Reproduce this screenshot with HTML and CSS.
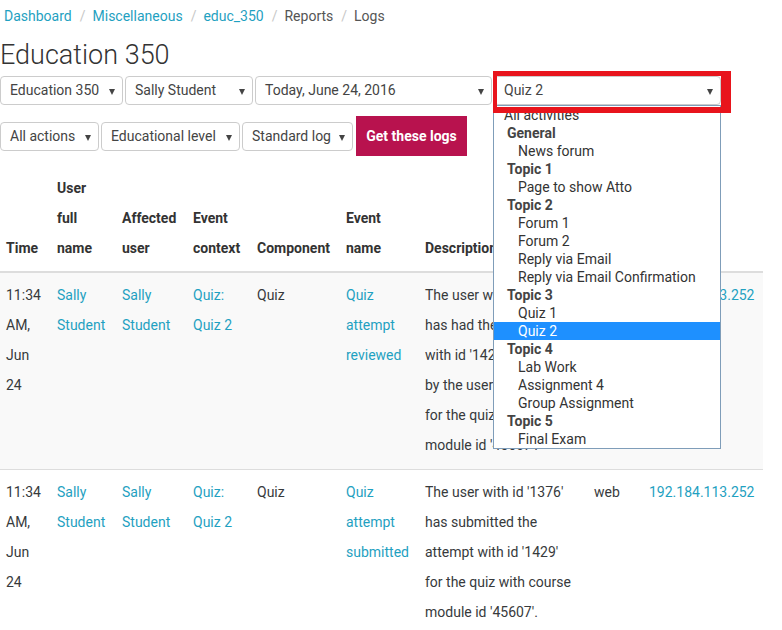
FILE: index.html
```html
<!DOCTYPE html>
<html lang="en">
<head>
<meta charset="utf-8">
<title>Logs</title>
<link rel="stylesheet" href="styles.css">
</head>
<body>
<div class="page">
  <nav class="breadcrumb">
    <a href="#">Dashboard</a><span class="sep">/</span><a href="#">Miscellaneous</a><span class="sep">/</span><a href="#">educ_350</a><span class="sep">/</span><span class="crumb">Reports</span><span class="sep">/</span><span class="crumb">Logs</span>
  </nav>
  <h1 class="title">Education 350</h1>

  <div class="filters">
    <div class="select w-course">Education 350<span class="arrow"></span></div>
    <div class="select w-user">Sally Student<span class="arrow"></span></div>
    <div class="select w-date">Today, June 24, 2016<span class="arrow"></span></div>
    <div class="select w-activity">Quiz 2<span class="arrow"></span></div>
  </div>
  <div class="filters second">
    <div class="select w-actions">All actions<span class="arrow"></span></div>
    <div class="select w-level">Educational level<span class="arrow"></span></div>
    <div class="select w-log">Standard log<span class="arrow"></span></div>
    <button class="btn-primary">Get these logs</button>
  </div>

  <table class="logs">
    <colgroup>
      <col class="c-time"><col class="c-user"><col class="c-aff"><col class="c-ctx"><col class="c-comp"><col class="c-event"><col class="c-desc"><col class="c-origin"><col class="c-ip">
    </colgroup>
    <thead>
      <tr>
        <th>Time</th>
        <th class="user">User full name</th>
        <th>Affected user</th>
        <th>Event context</th>
        <th>Component</th>
        <th>Event name</th>
        <th class="desc">Description</th>
        <th>Origin</th>
        <th>IP address</th>
      </tr>
    </thead>
    <tbody>
      <tr class="odd">
        <td>11:34 AM, Jun 24</td>
        <td class="user"><a href="#">Sally Student</a></td>
        <td><a href="#">Sally Student</a></td>
        <td><a href="#">Quiz: Quiz 2</a></td>
        <td>Quiz</td>
        <td><a href="#">Quiz attempt reviewed</a></td>
        <td class="desc">The user with id '1376' has had their attempt with id '1429' reviewed by the user with id '2' for the quiz with course module id '45607'.</td>
        <td>web</td>
        <td><a href="#">192.184.113.252</a></td>
      </tr>
      <tr>
        <td>11:34 AM, Jun 24</td>
        <td class="user"><a href="#">Sally Student</a></td>
        <td><a href="#">Sally Student</a></td>
        <td><a href="#">Quiz: Quiz 2</a></td>
        <td>Quiz</td>
        <td><a href="#">Quiz attempt submitted</a></td>
        <td class="desc">The user with id '1376' has submitted the attempt with id '1429' for the quiz with course module id '45607'.</td>
        <td>web</td>
        <td><a href="#">192.184.113.252</a></td>
      </tr>
    </tbody>
  </table>

  <ul class="dropdown">
    <li class="opt top">All activities</li>
    <li class="grp">General</li>
    <li class="opt">News forum</li>
    <li class="grp">Topic 1</li>
    <li class="opt">Page to show Atto</li>
    <li class="grp">Topic 2</li>
    <li class="opt">Forum 1</li>
    <li class="opt">Forum 2</li>
    <li class="opt">Reply via Email</li>
    <li class="opt">Reply via Email Confirmation</li>
    <li class="grp">Topic 3</li>
    <li class="opt">Quiz 1</li>
    <li class="opt selected">Quiz 2</li>
    <li class="grp">Topic 4</li>
    <li class="opt">Lab Work</li>
    <li class="opt">Assignment 4</li>
    <li class="opt">Group Assignment</li>
    <li class="grp">Topic 5</li>
    <li class="opt">Final Exam</li>
  </ul>

  <div class="highlight-box"></div>
</div>
</body>
</html>
```

FILE: styles.css
```css
* { box-sizing: border-box; }

html, body {
  margin: 0;
  padding: 0;
  background: #fff;
}

body {
  font-family: Roboto, "Liberation Sans", Arial, sans-serif;
  font-size: 14px;
  color: #373a3c;
}

a { color: #1fa1c1; text-decoration: none; }

.page {
  position: relative;
  width: 782px;
  min-height: 630px;
}

.breadcrumb {
  padding: 6px 4px 0;
  line-height: 20px;
  font-size: 14px;
}
.breadcrumb .sep {
  color: #c8c8c8;
  padding: 0 7px 0 8px;
}
.breadcrumb .crumb { color: #555; }

.title {
  margin: 11px 0 0;
  font-size: 27px;
  line-height: 36px;
  font-weight: 300;
  color: #333;
}

.filters {
  display: flex;
  align-items: center;
  gap: 2px;
  margin-top: 3px;
}
.filters.second {
  margin-top: 11px;
}

.select {
  position: relative;
  height: 29px;
  line-height: 27px;
  border: 1px solid #ccc;
  border-radius: 4px;
  padding: 0 24px 0 9px;
  color: #444;
  background: #fff;
  white-space: nowrap;
}
.select .arrow {
  position: absolute;
  right: 7px;
  top: 12px;
  width: 0;
  height: 0;
  border-left: 3.5px solid transparent;
  border-right: 3.5px solid transparent;
  border-top: 6px solid #444;
}

.w-course { width: 123px; }
.w-user { width: 128px; }
.w-date { width: 237px; }
.w-activity { width: 227px; }
.w-actions { width: 99px; }
.w-level { width: 139px; }
.w-log { width: 111px; }

.btn-primary {
  margin-left: 1px;
  width: 111px;
  height: 40px;
  border: 0;
  border-radius: 0;
  background: #b8124e;
  color: #fff;
  font-family: inherit;
  font-size: 14px;
  font-weight: 700;
  padding: 0;
}

.logs {
  margin-top: 9px;
  width: 763px;
  table-layout: fixed;
  border-collapse: collapse;
  line-height: 30px;
}
.c-time { width: 51px; }
.c-user { width: 65px; }
.c-aff { width: 71px; }
.c-ctx { width: 64px; }
.c-comp { width: 89px; }
.c-event { width: 79px; }
.c-desc { width: 169px; }
.c-origin { width: 55px; }
.c-ip { width: 120px; }

.logs th {
  text-align: left;
  vertical-align: bottom;
  font-weight: 700;
  color: #333;
  padding: 8px 6px 8px;
  border-bottom: 2px solid #ddd;
}
.logs td {
  vertical-align: top;
  padding: 7px 6px 9px;
  border-bottom: 1px solid #ddd;
}
.logs .user { padding-right: 9px; }
.logs .desc { padding-right: 16px; }
.logs tr.odd td { background: #f9f9f9; }

.dropdown {
  position: absolute;
  left: 493px;
  top: 105px;
  width: 228px;
  margin: 0;
  padding: 0;
  list-style: none;
  background: #fff;
  border: 1px solid #7f9db9;
  font-size: 14px;
  line-height: 18px;
  color: #333;
}
.dropdown li {
  height: 18px;
  white-space: nowrap;
}
.dropdown .opt { padding-left: 24px; }
.dropdown .opt.top { padding-left: 10px; }
.dropdown .grp { padding-left: 13px; font-weight: 700; color: #444; }
.dropdown .selected { background: #1e90ff; color: #fff; }

.highlight-box {
  position: absolute;
  left: 493px;
  top: 71px;
  width: 238px;
  height: 42px;
  border-style: solid;
  border-color: #e8141c;
  border-width: 5px 10px 6px 4px;
}
```
